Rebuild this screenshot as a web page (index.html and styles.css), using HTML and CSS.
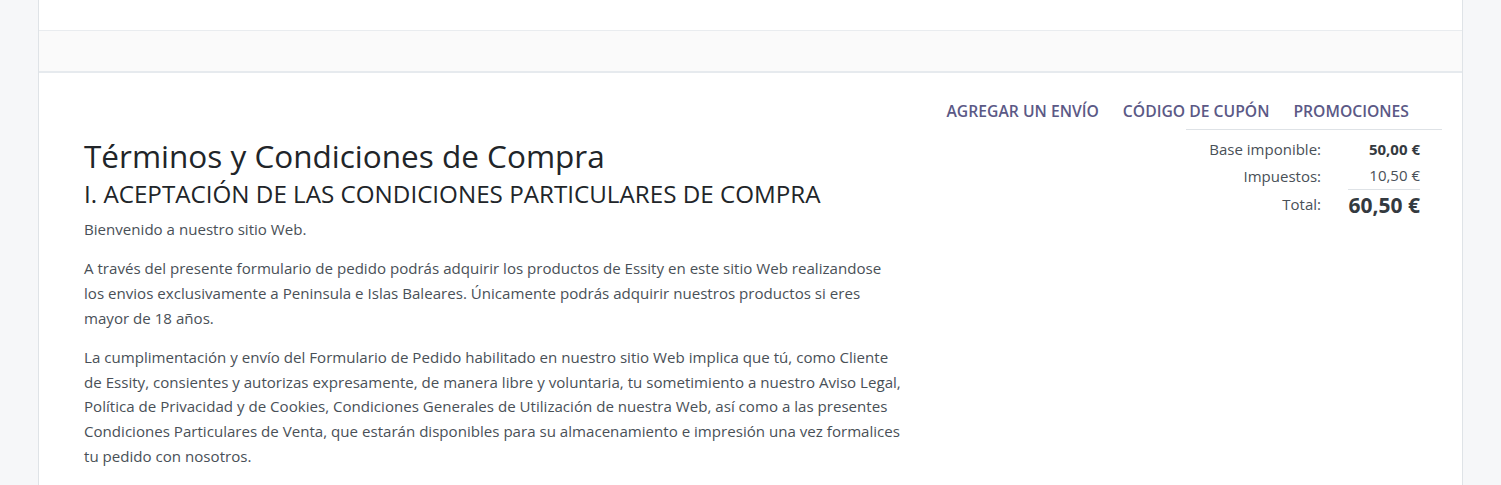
FILE: index.html
```html
<!DOCTYPE html>
<html lang="es">
<head>
<meta charset="utf-8">
<title>Términos y Condiciones de Compra</title>
<link rel="stylesheet" href="styles.css">
</head>
<body>
<div class="card">
  <div class="topbar"></div>
  <div class="band"></div>
  <div class="content">
    <nav class="actions">
      <a class="action" href="#">AGREGAR UN ENVÍO</a>
      <a class="action" href="#">CÓDIGO DE CUPÓN</a>
      <a class="action" href="#">PROMOCIONES</a>
    </nav>
    <div class="main">
      <div class="terms">
        <h1 class="title">Términos y Condiciones de Compra</h1>
        <h2 class="subtitle">I. ACEPTACIÓN DE LAS CONDICIONES PARTICULARES DE COMPRA</h2>
        <p class="para">Bienvenido a nuestro sitio Web.</p>
        <p class="para">A través del presente formulario de pedido podrás adquirir los productos de Essity en este sitio Web realizandose<br>
        los envios exclusivamente a Peninsula e Islas Baleares. Únicamente podrás adquirir nuestros productos si eres<br>
        mayor de 18 años.</p>
        <p class="para">La cumplimentación y envío del Formulario de Pedido habilitado en nuestro sitio Web implica que tú, como Cliente<br>
        de Essity, consientes y autorizas expresamente, de manera libre y voluntaria, tu sometimiento a nuestro Aviso Legal,<br>
        Política de Privacidad y de Cookies, Condiciones Generales de Utilización de nuestra Web, así como a las presentes<br>
        Condiciones Particulares de Venta, que estarán disponibles para su almacenamiento e impresión una vez formalices<br>
        tu pedido con nosotros.</p>
      </div>
      <div class="summary">
        <table class="totals">
          <tr class="row">
            <td class="label">Base imponible:</td>
            <td class="value strong">50,00 €</td>
          </tr>
          <tr class="row">
            <td class="label">Impuestos:</td>
            <td class="value">10,50 €</td>
          </tr>
          <tr class="row total">
            <td class="label">Total:</td>
            <td class="value grand">60,50 €</td>
          </tr>
        </table>
      </div>
    </div>
  </div>
</div>
</body>
</html>
```
FILE: styles.css
```css
html, body {
  margin: 0;
  padding: 0;
}
body {
  background: #f6f7f9;
  font-family: "Open Sans", "Noto Sans", "Liberation Sans", sans-serif;
  color: #495057;
  height: 485px;
  overflow: hidden;
}
.card {
  margin: 0 38px;
  background: #fff;
  border-left: 1px solid #dfe3e7;
  border-right: 1px solid #dfe3e7;
  min-height: 485px;
}
.topbar {
  height: 30px;
  border-bottom: 1px solid #e9ecef;
}
.band {
  height: 40px;
  background: #fafafa;
  border-bottom: 2px solid #e6eaee;
}
.content {
  padding: 0 20px 0 45px;
}
.actions {
  display: flex;
  justify-content: flex-end;
  padding-top: 27px;
  margin-right: 21px;
}
.action {
  padding: 0 12px;
  font-size: 15.7px;
  line-height: 22px;
  font-weight: 600;
  color: #5b5986;
  text-decoration: none;
}
.main {
  display: flex;
  justify-content: space-between;
  align-items: flex-start;
  margin-top: 7px;
}
.terms {
  width: 860px;
  padding-top: 7px;
}
.title {
  margin: 0;
  font-size: 31.5px;
  line-height: 40px;
  font-weight: 500;
  color: #212529;
}
.subtitle {
  margin: 2px 0 7px;
  font-size: 24.2px;
  line-height: 32px;
  font-weight: 500;
  color: #212529;
}
.para {
  margin: 0 0 14.5px;
  font-size: 15.1px;
  line-height: 24.7px;
  white-space: nowrap;
}
.summary {
  width: 256px;
  border-top: 1px solid #dee2e6;
}
.totals {
  border-collapse: collapse;
  margin-left: auto;
  margin-right: 22px;
  margin-top: 5px;
}
.label {
  text-align: right;
  font-size: 15px;
  padding: 0 27px 0 0;
  height: 27px;
  color: #495057;
}
.value {
  text-align: right;
  font-size: 15px;
  padding: 0;
  width: 72px;
  white-space: nowrap;
}
.strong {
  font-weight: 700;
  color: #343a40;
}
.total .value {
  border-top: 1px solid #dee2e6;
  height: 30px;
}
.grand {
  font-size: 21px;
  font-weight: 700;
  color: #343a40;
}
```
